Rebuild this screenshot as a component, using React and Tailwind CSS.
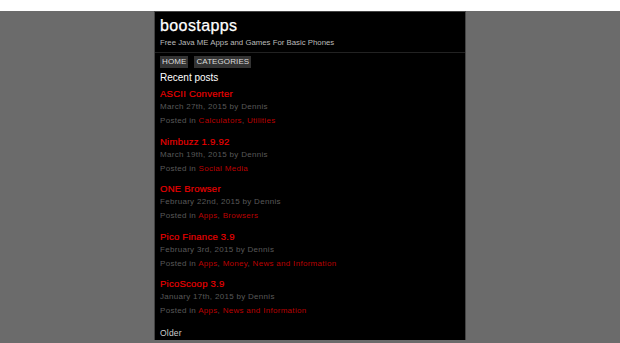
const posts = [
  { title: 'ASCII Converter', date: 'March 27th, 2015', cats: ['Calculators', 'Utilities'] },
  { title: 'Nimbuzz 1.9.92', date: 'March 19th, 2015', cats: ['Social Media'] },
  { title: 'ONE Browser', date: 'February 22nd, 2015', cats: ['Apps', 'Browsers'] },
  { title: 'Pico Finance 3.9', date: 'February 3rd, 2015', cats: ['Apps', 'Money', 'News and Information'] },
  { title: 'PicoScoop 3.9', date: 'January 17th, 2015', cats: ['Apps', 'News and Information'] },
];

export default function App() {
  return (
    <div className="min-h-screen bg-[#6b6b6b] font-['Liberation_Sans',Arial,sans-serif]">
      <div className="mx-auto mt-[11px] w-[312px] border border-[#444] border-b-0 bg-black">
        {/* Header */}
        <div className="border-b border-[#222] px-[5px] pb-[3px] pt-[4px]">
          <h1 className="text-[16px] leading-[20px] tracking-[0.4px] text-white [-webkit-text-stroke:0.25px_#fff]">boostapps</h1>
          <p className="mt-[0.5px] text-[7.8px] leading-[12px] text-[#bbb]">Free Java ME Apps and Games For Basic Phones</p>
        </div>

        <div className="px-[4px]">
          {/* Nav */}
          <div className="mt-[3.5px] flex gap-[6px] pl-[1px]">
            <a className="bg-[#333] px-[2px] text-[8px] leading-[12px] tracking-[0.1px] text-[#ddd]">HOME</a>
            <a className="bg-[#333] px-[2px] text-[8px] leading-[12px] tracking-[0.1px] text-[#ddd]">CATEGORIES</a>
          </div>

          <h2 className="mt-[2.7px] pl-[1px] text-[10px] leading-[14px] text-white">Recent posts</h2>

          <div className="mt-[3.5px] pl-[1px]">
            {posts.map((p) => (
              <div key={p.title} className="mb-[7.5px]">
                <h3 className="text-[9.5px] leading-[12px] tracking-[0.25px] text-[#e00] [-webkit-text-stroke:0.15px_#e00]">{p.title}</h3>
                <p className="text-[8px] leading-[14px] tracking-[0.3px] text-[#595959]">{p.date} by Dennis</p>
                <p className="text-[8px] leading-[14px] tracking-[0.3px] text-[#595959]">
                  Posted in{' '}
                  {p.cats.map((c, i) => (
                    <span key={c}>
                      <a className="text-[#b00]">{c}</a>
                      {i < p.cats.length - 1 ? ', ' : ''}
                    </span>
                  ))}
                </p>
              </div>
            ))}
          </div>

          <p className="pl-[1px] text-[8.5px] leading-[14px] tracking-[0.2px] text-[#ccc]">Older</p>
        </div>
      </div>
    </div>
  );
}
